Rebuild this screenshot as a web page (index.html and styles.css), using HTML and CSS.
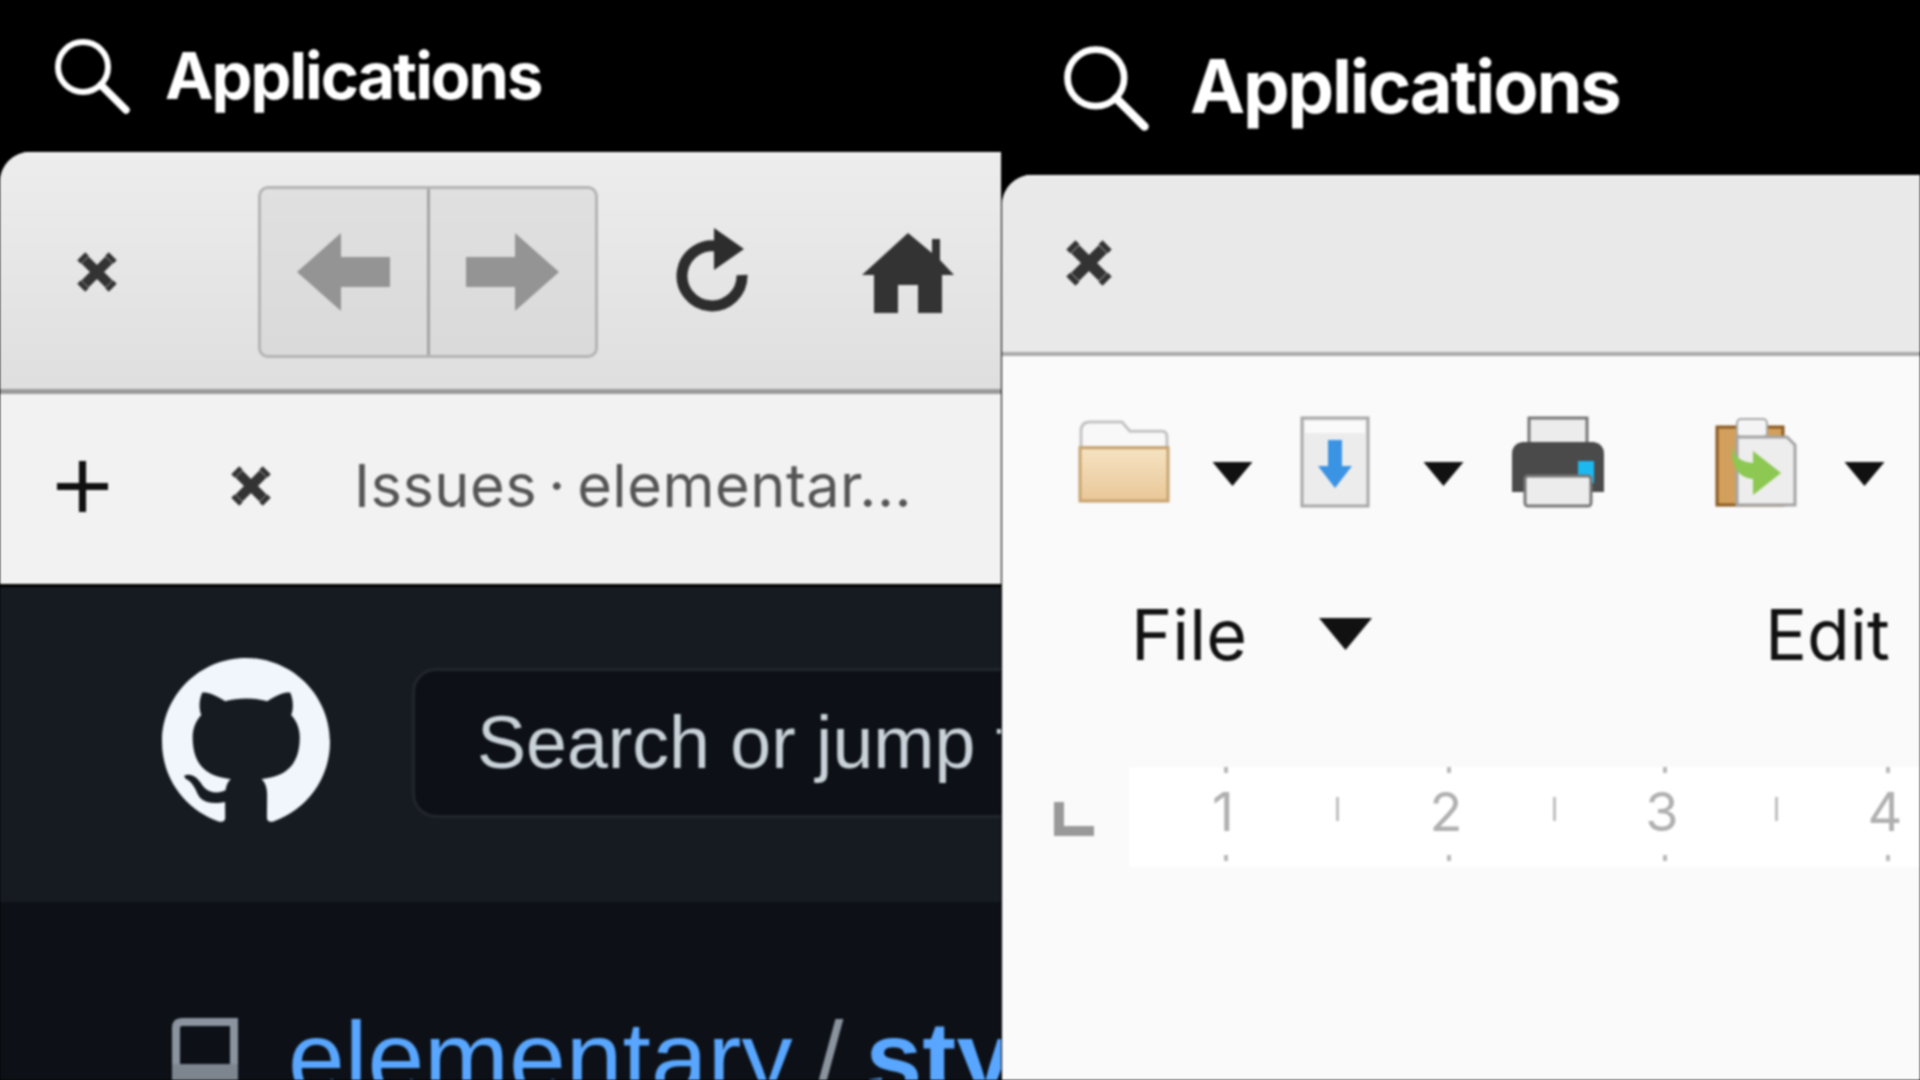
FILE: index.html
```html
<!DOCTYPE html>
<html lang="en">
<head>
<meta charset="utf-8">
<title>Applications</title>
<link rel="stylesheet" href="styles.css">
</head>
<body>
<svg class="defs" width="0" height="0" aria-hidden="true">
  <symbol id="search" viewBox="0 0 76 76"><circle cx="29" cy="29" r="25" fill="none" stroke="currentColor" stroke-width="6"/><path d="M47 47 72 72" fill="none" stroke="currentColor" stroke-width="7.5" stroke-linecap="round"/></symbol>
  <symbol id="close" viewBox="0 0 40 40"><path d="M8 8 32 32M32 8 8 32" fill="none" stroke="#333" stroke-width="10"/><path d="M2 10 10 2M30 2 38 10M2 30 10 38M38 30 30 38" fill="none" stroke="#333" stroke-width="5"/></symbol>
  <symbol id="drop" viewBox="0 0 40 24"><path d="M0 0H40L20 24Z" fill="#111"/></symbol>
</svg>
<main class="desktop">
  <section class="pane pane-left">
    <div class="panel">
      <svg class="panel-icon"><use href="#search"/></svg>
      <span class="panel-label">Applications</span>
    </div>
    <div class="window">
      <header class="head head-left">
        <svg class="close"><use href="#close"/></svg>
        <div class="nav-group">
          <div class="nav-btn"><svg class="arrow" viewBox="0 0 93 78"><path d="M0 39 44 0V24H93V54H44V78Z" fill="#949494"/></svg></div>
          <div class="nav-btn"><svg class="arrow" viewBox="0 0 93 78"><path d="M93 39 49 0V24H0V54H49V78Z" fill="#949494"/></svg></div>
        </div>
        <svg class="reload" viewBox="0 0 72 88"><path d="M44 19A30 30 0 1 0 66 47" fill="none" stroke="#2d2d2d" stroke-width="11"/><path d="M38 0 68 21 38 42Z" fill="#2d2d2d"/></svg>
        <svg class="home" viewBox="0 0 92 80"><path d="M46 0 70 20V6H78V27L92 42H80V80H56V52H36V80H12V42H0Z" fill="#333"/></svg>
      </header>
      <div class="tabs">
        <svg class="plus" viewBox="0 0 50 50"><path d="M25 0V50M0 25H50" stroke="#111" stroke-width="7"/></svg>
        <svg class="close close-tab"><use href="#close"/></svg>
        <span class="tab-title">Issues · elementar...</span>
      </div>
      <div class="gh-head">
        <svg class="gh-logo" viewBox="0 0 16 16"><path fill="#f0f6fc" d="M8 0C3.58 0 0 3.58 0 8c0 3.54 2.29 6.53 5.47 7.59.4.07.55-.17.55-.38 0-.19-.01-.82-.01-1.49-2.01.37-2.53-.49-2.69-.94-.09-.23-.48-.94-.82-1.13-.28-.15-.68-.52-.01-.53.63-.01 1.08.58 1.23.82.72 1.21 1.87.87 2.33.66.07-.52.28-.87.51-1.07-1.78-.2-3.64-.89-3.64-3.95 0-.87.31-1.59.82-2.15-.08-.2-.36-1.02.08-2.12 0 0 .67-.21 2.2.82.64-.18 1.32-.27 2-.27.68 0 1.36.09 2 .27 1.53-1.04 2.2-.82 2.2-.82.44 1.1.16 1.92.08 2.12.51.56.82 1.27.82 2.15 0 3.07-1.87 3.75-3.65 3.95.29.25.54.73.54 1.48 0 1.07-.01 1.93-.01 2.2 0 .21.15.46.55.38A8.013 8.013 0 0016 8c0-4.42-3.58-8-8-8z"/></svg>
        <div class="gh-search">Search or jump to...</div>
      </div>
      <div class="gh-main">
        <svg class="repo-icon" viewBox="0 0 66 63"><path d="M4 63V10Q4 4 10 4H62V48" fill="none" stroke="#8b949e" stroke-width="8"/><path d="M0 46H66V63H0Z" fill="#7d858f"/></svg>
        <span class="repo-path"><span class="repo-owner">elementary</span> <span class="repo-sep">/</span> <strong class="repo-name">stylesheet</strong></span>
      </div>
    </div>
  </section>
  <section class="pane pane-right">
    <div class="panel panel-right">
      <svg class="panel-icon"><use href="#search"/></svg>
      <span class="panel-label">Applications</span>
    </div>
    <div class="window">
      <header class="head head-right">
        <svg class="close"><use href="#close"/></svg>
      </header>
      <div class="doc">
        <div class="toolbar">
          <svg class="tool-folder" viewBox="0 0 92 82" preserveAspectRatio="none"><path d="M3 28V12Q3 3 12 3H44L52 12H84Q89 12 89 18V28Z" fill="#f8f8f8" stroke="#c4c4c4" stroke-width="3"/><rect x="2" y="28" width="88" height="52" fill="url(#tan)" stroke="#c8a470" stroke-width="3"/><defs><linearGradient id="tan" x1="0" y1="0" x2="0" y2="1"><stop offset="0" stop-color="#f6e2c2"/><stop offset="1" stop-color="#e9c898"/></linearGradient></defs></svg>
          <svg class="drop drop-a"><use href="#drop"/></svg>
          <svg class="tool-doc" viewBox="0 0 70 92"><rect x="2" y="2" width="66" height="88" fill="#ececec" stroke="#a8a8a8" stroke-width="3"/><rect x="5" y="5" width="60" height="12" fill="#fafafa"/><path d="M28 24H42V50H52L35 72 18 50H28Z" fill="#3b93e4"/></svg>
          <svg class="drop drop-b"><use href="#drop"/></svg>
          <svg class="tool-printer" viewBox="0 0 92 92"><rect x="17" y="2" width="58" height="34" fill="#ececec" stroke="#777" stroke-width="3"/><path d="M10 26H82Q92 28 92 38V76H0V38Q0 28 10 26Z" fill="#4a4a4a"/><rect x="66" y="45" width="16" height="22" fill="#1cb8f0"/><rect x="13" y="60" width="66" height="30" rx="3" fill="#ececec" stroke="#777" stroke-width="3"/></svg>
          <svg class="tool-clip" viewBox="0 0 82 90"><rect x="2" y="10" width="66" height="78" fill="#d2a05c" stroke="#8a5a20" stroke-width="3"/><rect x="22" y="2" width="30" height="18" rx="4" fill="#f4f4f4" stroke="#aaa" stroke-width="2"/><path d="M22 20H72L80 28V88H22Z" fill="#ededed" stroke="#a4a4a4" stroke-width="3"/><path d="M17 24Q16 44 38 46V34L66 56 38 78V62Q14 60 17 24Z" fill="#8cc852"/></svg>
          <svg class="drop drop-c"><use href="#drop"/></svg>
        </div>
        <div class="menubar">
          <span class="menu-item menu-file">File</span>
          <svg class="menu-drop"><use href="#drop"/></svg>
          <span class="menu-item menu-edit">Edit</span>
        </div>
        <div class="ruler-row">
          <div class="ruler-stop"></div>
          <div class="ruler">
            <span class="mark mark-1"><i class="tick-top"></i><b>1</b><i class="tick-bottom"></i></span>
            <i class="mid mid-1"></i>
            <span class="mark mark-2"><i class="tick-top"></i><b>2</b><i class="tick-bottom"></i></span>
            <i class="mid mid-2"></i>
            <span class="mark mark-3"><i class="tick-top"></i><b>3</b><i class="tick-bottom"></i></span>
            <i class="mid mid-3"></i>
            <span class="mark mark-4"><i class="tick-top"></i><b>4</b><i class="tick-bottom"></i></span>
          </div>
        </div>
      </div>
    </div>
  </section>
</main>
</body>
</html>
```
FILE: styles.css
```css
* { box-sizing: border-box; }
html, body { margin: 0; height: 100%; background: #000; overflow: hidden; }
.defs { position: absolute; }
.desktop { display: flex; width: 1920px; height: 1080px; font-family: Inter, "Noto Sans", sans-serif; filter: blur(1.2px); }
.pane { display: flex; flex-direction: column; height: 1080px; overflow: hidden; background: #000; }
.pane-left { width: 1002px; flex: none; border-right: 1px solid #000; }
.pane-right { flex: 1; min-width: 0; }

.panel { display: flex; align-items: center; flex: none; height: 152px; padding-left: 54px; color: #fff; }
.panel-icon { width: 76px; height: 76px; flex: none; }
.panel-label { margin-left: 35px; margin-top: -2px; font-size: 65px; font-weight: 700; letter-spacing: -2px; line-height: 1; white-space: nowrap; }
.panel-right { height: 175px; padding-left: 61px; }
.panel-right .panel-icon { width: 86px; height: 86px; }
.panel-right .panel-label { margin-left: 41px; margin-top: -4px; font-size: 74px; letter-spacing: -2.2px; }

.window { flex: 1; display: flex; flex-direction: column; min-height: 0; border-radius: 30px 0 0 0; overflow: hidden; background: #fafafa; }

.head { display: flex; align-items: center; flex: none; }
.head-left { height: 242px; padding-left: 77px; background: linear-gradient(#ededed, #dfdfdf); border-top: 2px solid #f6f6f6; border-bottom: 5px solid #9a9a9a; }
.head-right { height: 181px; padding-left: 64px; background: #e9e9e9; border-top: 2px solid #f2f2f2; border-bottom: 4px solid #ababab; }
.close { width: 40px; height: 40px; flex: none; }
.head-right .close { width: 46px; height: 46px; margin-top: -4px; }

.nav-group { display: flex; width: 340px; height: 172px; margin-left: 141px; border: 3px solid #b4b4b4; border-radius: 10px; background: linear-gradient(#e0e0e0, #dadada); overflow: hidden; }
.nav-btn { flex: 1; display: flex; align-items: center; justify-content: center; }
.nav-btn + .nav-btn { border-left: 3px solid #a4a4a4; }
.arrow { width: 93px; height: 78px; }
.reload { width: 72px; height: 88px; margin-left: 78px; }
.home { width: 92px; height: 80px; margin-left: 114px; margin-top: 3px; }

.tabs { display: flex; align-items: center; flex: none; height: 193px; padding: 0 0 6px 57px; background: #f2f2f2; border-bottom: 3px solid #000; }
.plus { width: 51px; height: 51px; flex: none; }
.close-tab { margin-left: 123px; }
.tab-title { margin-left: 83px; font-size: 59.5px; letter-spacing: 0.5px; word-spacing: -6px; color: #555; white-space: nowrap; line-height: 1; }

.gh-head { display: flex; align-items: center; flex: none; height: 315px; padding-left: 162px; background: #161b22; }
.gh-logo { width: 168px; height: 168px; flex: none; margin-top: -6px; }
.gh-search { flex: none; width: 700px; height: 150px; margin-left: 82px; margin-top: -4px; padding-left: 62px; display: flex; align-items: center; border: 3px solid #21262d; border-radius: 24px; background: #0d1117; color: #c9d1d9; font-family: "Liberation Sans", Arial, sans-serif; font-size: 73.5px; white-space: nowrap; }

.gh-main { flex: 1; display: flex; align-items: flex-start; padding: 116px 0 0 172px; background: #0d1117; white-space: nowrap; }
.repo-icon { width: 66px; height: 63px; flex: none; }
.repo-path { margin-left: 50px; margin-top: -11px; font-family: "Liberation Sans", Arial, sans-serif; font-size: 102px; word-spacing: -6px; line-height: 1; color: #8b949e; }
.repo-owner, .repo-name { color: #58a6ff; }

.doc { flex: 1; display: flex; flex-direction: column; background: #fafafa; }
.toolbar { display: flex; align-items: center; flex: none; height: 92px; margin-top: 60px; padding-left: 76px; }
.tool-folder { width: 92px; height: 84px; margin-top: -2px; flex: none; }
.drop { width: 41px; height: 24px; flex: none; margin-top: 24px; }
.drop-a { margin-left: 42px; }
.tool-doc { width: 70px; height: 92px; margin-left: 47px; flex: none; }
.drop-b { margin-left: 53px; }
.tool-printer { width: 92px; height: 92px; margin-left: 48px; flex: none; }
.tool-clip { width: 82px; height: 90px; margin-left: 111px; flex: none; }
.drop-c { margin-left: 47px; }

.menubar { display: flex; align-items: center; flex: none; height: 90px; margin-top: 82px; padding-left: 129px; }
.menu-item { font-size: 70px; line-height: 1; color: #111; }
.menu-drop { width: 53px; height: 32px; margin-left: 72px; margin-top: -2px; flex: none; }
.menu-edit { margin-left: 393px; }

.ruler-row { display: flex; align-items: center; flex: none; height: 100px; margin-top: 87px; }
.ruler-stop { width: 40px; height: 34px; margin-left: 52px; margin-top: 4px; border-left: 10px solid #999; border-bottom: 10px solid #999; flex: none; }
.ruler { position: relative; flex: 1; height: 100px; margin-left: 35px; background: #fff; }
.mark { position: absolute; top: 0; width: 0; height: 100%; }
.mark b { position: absolute; top: 15px; left: -27px; width: 52px; text-align: center; font-size: 54px; font-weight: 400; line-height: 60px; color: #b0b0b0; }
.tick-top, .tick-bottom { position: absolute; left: 0; width: 4px; height: 6px; background: #b8b8b8; }
.tick-top { top: 0; }
.tick-bottom { bottom: 6px; }
.mark-1 { left: 95px; }
.mark-2 { left: 318px; }
.mark-3 { left: 534px; }
.mark-4 { left: 757px; }
.mid { position: absolute; top: 30px; width: 3px; height: 24px; background: #c0c0c0; }
.mid-1 { left: 207px; }
.mid-2 { left: 424px; }
.mid-3 { left: 646px; }
```
